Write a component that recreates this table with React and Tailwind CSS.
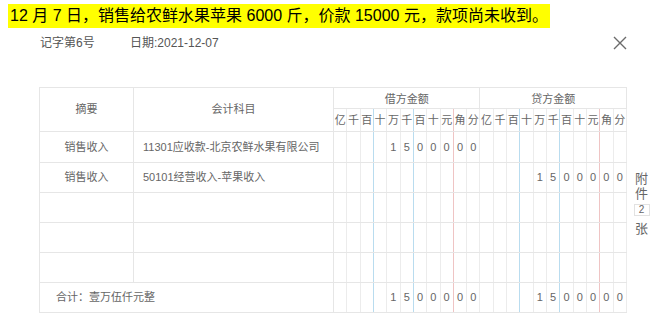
import React from 'react';

const UNITS = ['亿', '千', '百', '十', '万', '千', '百', '十', '元', '角', '分'];
const AMOUNT = ['', '', '', '', '1', '5', '0', '0', '0', '0', '0'];

// 百|十 and 千|百 get blue lines, 元|角 a red one
const lineClass = (i) => {
  if (i === 2 || i === 5) return 'border-r-[#b9dcef]';
  if (i === 8) return 'border-r-[#efc4c4]';
  return 'border-r-[#ececec]';
};

const DigitCells = ({ debit, credit, header }) => (
  <>
    {[0, 1].map((side) =>
      UNITS.map((u, i) => {
        const values = side === 0 ? debit : credit;
        const text = header ? u : values ? values[i] : '';
        return (
          <td
            key={side + '-' + i}
            className={`border-y border-y-[#e6e6e6] border-l-0 border-r p-0 text-center text-[11px] ${lineClass(i)}`}
          >
            {text}
          </td>
        );
      })
    )}
  </>
);

const rows = [
  { summary: '销售收入', account: '11301应收款-北京农鲜水果有限公司', debit: AMOUNT, credit: null },
  { summary: '销售收入', account: '50101经营收入-苹果收入', debit: null, credit: AMOUNT },
  { summary: '', account: '', debit: null, credit: null },
  { summary: '', account: '', debit: null, credit: null },
  { summary: '', account: '', debit: null, credit: null },
];

export default function App() {
  return (
    <div className="w-[660px] h-[325px] bg-white overflow-hidden font-['Liberation_Sans','Noto_Sans_CJK_SC',sans-serif]">
      <div className="pt-[4px] pl-[8px]">
        <span className="inline-block h-[24px] px-[2px] bg-[#ffff00] text-[16px] leading-[24px] text-black">
          12 月 7 日，销售给农鲜水果苹果 6000 斤，价款 15000 元，款项尚未收到。
        </span>
      </div>

      <div className="mt-[6px] flex h-[18px] items-center pl-[40px] pr-[33px] text-[12px] text-[#555]">
        <span className="w-[90px]">记字第6号</span>
        <span>日期:2021-12-07</span>
        <svg className="ml-auto" width="14" height="14" viewBox="0 0 14 14">
          <path d="M1 1L13 13M13 1L1 13" stroke="#6b6b6b" strokeWidth="1.4" />
        </svg>
      </div>

      <div className="mt-[35px] flex pl-[39px]">
        <table className="w-[588px] table-fixed border-collapse border border-[#e2e2e2] text-[#666]">
          <colgroup>
            <col className="w-[94px]" />
            <col className="w-[200px]" />
          </colgroup>
          <tbody>
            <tr className="h-[21px]">
              <td rowSpan={2} className="border border-[#e6e6e6] text-center text-[11px]">摘要</td>
              <td rowSpan={2} className="border border-[#e6e6e6] text-center text-[11px]">会计科目</td>
              <td colSpan={11} className="border border-[#e6e6e6] pt-[2px] text-center text-[11px]">借方金额</td>
              <td colSpan={11} className="border border-[#e6e6e6] pt-[2px] text-center text-[11px]">贷方金额</td>
            </tr>
            <tr className="h-[23px]">
              <DigitCells header />
            </tr>
            {rows.map((r, idx) => (
              <tr key={idx} className={idx === 0 ? 'h-[31px]' : 'h-[30px]'}>
                <td className="border border-[#e6e6e6] text-center text-[11px]">{r.summary}</td>
                <td className="border border-[#e6e6e6] pl-[9px] text-[11px]">{r.account}</td>
                <DigitCells debit={r.debit} credit={r.credit} />
              </tr>
            ))}
            <tr className="h-[30px]">
              <td colSpan={2} className="border border-[#e6e6e6] pl-[16px] text-[11px]">合计：壹万伍仟元整</td>
              <DigitCells debit={AMOUNT} credit={AMOUNT} />
            </tr>
          </tbody>
        </table>

        <div className="ml-[6px] mt-[84px] flex w-[17px] flex-col items-center text-[13px] leading-[15px] text-[#666]">
          <span>附</span>
          <span>件</span>
          <span className="mt-[3px] flex h-[12px] w-[16px] items-center justify-center border border-[#e2e2e2] text-[10px] leading-none">
            2
          </span>
          <span className="mt-[5px]">张</span>
        </div>
      </div>
    </div>
  );
}
